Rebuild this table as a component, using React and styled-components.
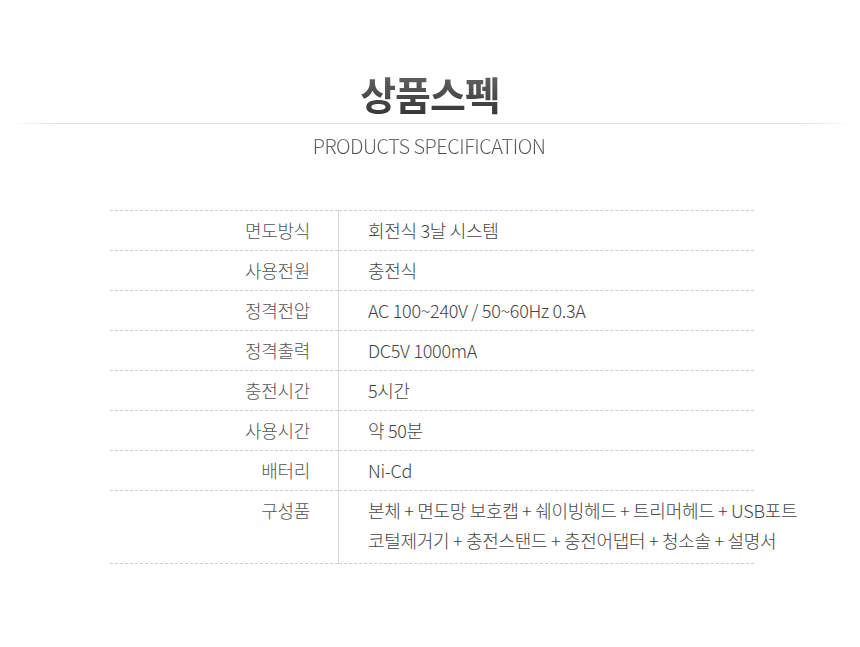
import styled, { createGlobalStyle } from 'styled-components';

const specs = [
  ['면도방식', '회전식 3날 시스템'],
  ['사용전원', '충전식'],
  ['정격전압', 'AC 100~240V / 50~60Hz 0.3A'],
  ['정격출력', 'DC5V 1000mA'],
  ['충전시간', '5시간'],
  ['사용시간', '약 50분'],
  ['배터리', 'Ni-Cd'],
  ['구성품', ['본체 + 면도망 보호캡 + 쉐이빙헤드 + 트리머헤드 + USB포트', '코털제거기 + 충전스탠드 + 충전어댑터 + 청소솔 + 설명서']],
];

export default function App() {
  return (
    <>
      <GlobalStyle />
      <PAGE>
        <TITLE>상품스펙</TITLE>
        <RULE />
        <SUBTITLE>PRODUCTS SPECIFICATION</SUBTITLE>
        <TABLE>
          <tbody>
            {specs.map(([label, value]) => (
              <ROW key={label}>
                <LABEL>{label}</LABEL>
                <VALUE multi={Array.isArray(value)}>
                  {Array.isArray(value) ? value.map((line) => <div key={line}>{line}</div>) : value}
                </VALUE>
              </ROW>
            ))}
          </tbody>
        </TABLE>
      </PAGE>
    </>
  );
}

const GlobalStyle = createGlobalStyle`
  body {
    margin: 0;
    background: #ffffff;
    font-family: "Noto Sans CJK KR", "Noto Sans", sans-serif;
  }
`;

const PAGE = styled.div`
  width: 860px;
  height: 647px;
  padding-top: 68px;
  box-sizing: border-box;
  display: flex;
  flex-direction: column;
  align-items: center;
`;

const TITLE = styled.h1`
  margin: 0;
  font-size: 39px;
  font-weight: 700;
  line-height: 50px;
  letter-spacing: -1px;
  background: linear-gradient(#6a6a6a, #333333);
  -webkit-background-clip: text;
  background-clip: text;
  color: transparent;
`;

const RULE = styled.div`
  width: 840px;
  height: 1px;
  margin-top: 5px;
  background: linear-gradient(to right, rgba(220,220,220,0), #dddddd 6%, #dddddd 94%, rgba(220,220,220,0));
`;

const SUBTITLE = styled.div`
  margin: 9px 0 0 -2px;
  font-size: 20px;
  font-weight: 300;
  line-height: 26px;
  letter-spacing: -0.5px;
  background: linear-gradient(#7a7a7a, #3f3f3f);
  -webkit-background-clip: text;
  background-clip: text;
  color: transparent;
`;

const TABLE = styled.table`
  margin: 51px 0 0 4px;
  width: 644px;
  table-layout: fixed;
  border-collapse: collapse;
  border-bottom: 1px dashed #cccccc;
  font-size: 18px;
  font-weight: 300;
  letter-spacing: -0.3px;
`;

const ROW = styled.tr`
  border-top: 1px dashed #cccccc;
`;

const LABEL = styled.td`
  width: 200px;
  height: 39px;
  padding: 0 28px 0 0;
  text-align: right;
  vertical-align: top;
  line-height: 38px;
  color: #555555;
  border-right: 1px solid #d5d5d5;
`;

const VALUE = styled.td`
  padding: ${(p) => (p.multi ? '4px 0 8px 29px' : '0 0 0 29px')};
  line-height: ${(p) => (p.multi ? '30px' : '38px')};
  color: #444444;
  white-space: nowrap;
  vertical-align: top;
`;
